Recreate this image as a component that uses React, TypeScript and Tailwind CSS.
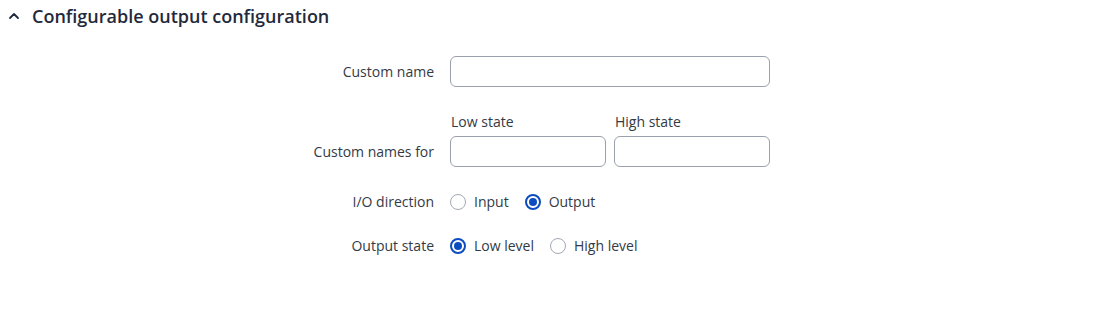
import React from 'react';

function Radio({ checked, label }: { checked?: boolean; label: string }) {
  return (
    <label className="flex items-center gap-2 mr-4">
      <span
        className={
          checked
            ? 'w-4 h-4 rounded-full border-2 border-[#0b4dbf] flex items-center justify-center'
            : 'w-4 h-4 rounded-full border border-[#a3a9b3]'
        }
      >
        {checked && <span className="w-2 h-2 rounded-full bg-[#0b4dbf]" />}
      </span>
      <span>{label}</span>
    </label>
  );
}

export default function App() {
  return (
    <div className="w-[1102px] h-[312px] bg-white text-[14px] text-[#333a45]" style={{ fontFamily: '"Open Sans", "Noto Sans", sans-serif' }}>
      <div className="h-[32px] flex items-center pl-[8px]">
        <svg width="12" height="12" viewBox="0 0 12 12" className="mr-[12px]">
          <path d="M2 8 L6 4 L10 8" fill="none" stroke="#1f2a3c" strokeWidth="1.8" strokeLinecap="round" strokeLinejoin="round" />
        </svg>
        <h2 className="text-[18px] font-semibold text-[#1f2a3c]">Configurable output configuration</h2>
      </div>

      <div className="flex items-center mt-6">
        <div className="w-[434px] text-right">Custom name</div>
        <input className="ml-4 w-[320px] h-[31px] rounded-md border border-[#9aa1ac]" />
      </div>

      <div className="flex mt-[25px]">
        <div className="w-[434px] self-end h-[31px] flex items-center justify-end">Custom names for</div>
        <div className="ml-4 flex gap-2">
          <div className="flex flex-col gap-1">
            <span className="leading-5 pl-px">Low state</span>
            <input className="w-[156px] h-[31px] rounded-md border border-[#9aa1ac]" />
          </div>
          <div className="flex flex-col gap-1">
            <span className="leading-5 pl-px">High state</span>
            <input className="w-[156px] h-[31px] rounded-md border border-[#9aa1ac]" />
          </div>
        </div>
      </div>

      <div className="flex items-center mt-[25px] leading-5">
        <div className="w-[434px] text-right">I/O direction</div>
        <div className="ml-4 flex items-center">
          <Radio label="Input" />
          <Radio checked label="Output" />
        </div>
      </div>

      <div className="flex items-center mt-[24px] leading-5">
        <div className="w-[434px] text-right">Output state</div>
        <div className="ml-4 flex items-center">
          <Radio checked label="Low level" />
          <Radio label="High level" />
        </div>
      </div>
    </div>
  );
}
